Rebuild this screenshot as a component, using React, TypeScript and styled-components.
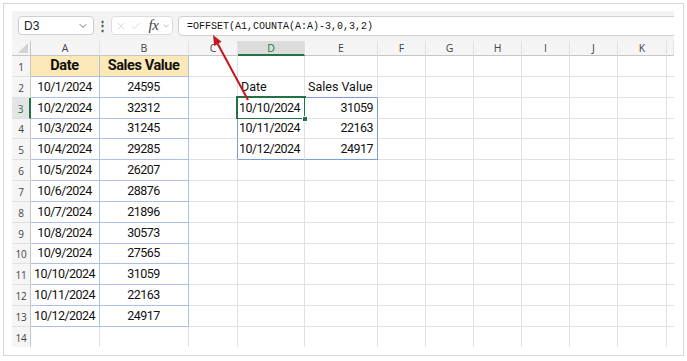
import React from "react";
import styled, { createGlobalStyle, css } from "styled-components";
import { ChevronDown, X, Check } from "lucide-react";

const GlobalStyle = createGlobalStyle`
  html, body {
    margin: 0;
    padding: 0;
    background: #ffffff;
  }
  body {
    font-family: "Liberation Sans", Arial, sans-serif;
  }
`;

const GREEN = "#217346";
const GRID = "#e1e1e1";
const HEAD_LINE = "#c6c6c6";
const TABLE_BLUE = "#abc0e6";
const RANGE_BLUE = "#7c9dd8";

const Frame = styled.div`
  margin: 3px 0 0 3px;
  width: 681px;
  height: 353px;
  box-sizing: border-box;
  border: 1px solid #d6d6d6;
  padding: 7px 8px 0 8px;
  background: #ffffff;
`;

const Sheet = styled.div`
  position: relative;
  width: 662px;
  height: 336px;
  overflow: hidden;
  background: #f3f3f3;
`;

const FormulaBar = styled.div`
  display: flex;
  align-items: flex-start;
  height: 30px;
  padding: 5px 0 0 6px;
  box-sizing: border-box;
`;

const NameBox = styled.div`
  width: 76px;
  height: 19px;
  box-sizing: border-box;
  border: 1px solid #cfcfcf;
  border-radius: 4px;
  background: #fff;
  display: flex;
  align-items: center;
  justify-content: space-between;
  padding: 0 4px 0 5px;
  font-size: 12px;
  color: #222;
`;

const Dots = styled.div`
  width: 17px;
  height: 19px;
  display: flex;
  align-items: center;
  justify-content: center;
  font-size: 13px;
  font-weight: bold;
  color: #555;
`;

const FuncBox = styled.div`
  width: 62px;
  height: 19px;
  box-sizing: border-box;
  border: 1px solid #dcdcdc;
  border-radius: 4px;
  background: #fff;
  display: flex;
  align-items: center;
  gap: 3px;
  padding: 0 2px 0 3px;
  color: #b8b8b8;
`;

const Fx = styled.span`
  font-family: "Liberation Serif", "Times New Roman", serif;
  font-style: italic;
  font-size: 15px;
  line-height: 15px;
  color: #444;
  margin-left: 4px;
  letter-spacing: -0.3px;
`;

const FormulaInput = styled.div`
  flex: 1;
  height: 20px;
  margin: 0 -6px 0 5px;
  box-sizing: border-box;
  border: 1px solid #d0d0d0;
  border-radius: 4px;
  background: #fff;
  display: flex;
  align-items: center;
  padding-left: 8px;
  font-family: "Liberation Mono", "Courier New", monospace;
  font-size: 10px;
  color: #111;
`;

const Grid = styled.div`
  display: grid;
  grid-template-columns: 19px 69px 89px 49px 67px 73px 48px 48px 48px 48px 48px 49px 7px;
  grid-template-rows: 15px repeat(14, 20.85px);
  background: #ffffff;
`;

const Corner = styled.div`
  background: #f5f5f5;
  border-right: 1px solid ${HEAD_LINE};
  border-bottom: 1px solid ${HEAD_LINE};
  box-sizing: border-box;
  display: flex;
  align-items: flex-end;
  justify-content: flex-end;
  padding: 0 2px 2px 0;
`;

const ColHead = styled.div<{ $active?: boolean }>`
  box-sizing: border-box;
  background: ${p => (p.$active ? "#dcdcdc" : "#f5f5f5")};
  border-right: 1px solid ${GRID};
  border-bottom: ${p => (p.$active ? `2px solid ${GREEN}` : `1px solid ${HEAD_LINE}`)};
  display: flex;
  align-items: center;
  justify-content: center;
  font-size: 10.5px;
  color: ${p => (p.$active ? GREEN : "#444")};
  font-family: "Open Sans", "Liberation Sans", sans-serif;
`;

const RowHead = styled.div<{ $active?: boolean }>`
  box-sizing: border-box;
  background: ${p => (p.$active ? "#e4e4e4" : "#f5f5f5")};
  border-right: ${p => (p.$active ? `2px solid ${GREEN}` : `1px solid ${HEAD_LINE}`)};
  border-bottom: 1px solid ${GRID};
  display: flex;
  align-items: flex-end;
  justify-content: center;
  padding-bottom: 2px;
  font-size: 10px;
  letter-spacing: -0.2px;
  color: ${p => (p.$active ? GREEN : "#444")};
  font-family: "Open Sans", "Liberation Sans", sans-serif;
`;

type Align = "left" | "center" | "right";

const Cell = styled.div<{
  $align: Align;
  $bold?: boolean;
  $bg?: string;
  $right: string;
  $bottom: string;
  $numeric?: boolean;
  $selected?: boolean;
}>`
  position: relative;
  box-sizing: border-box;
  background: ${p => p.$bg || "#ffffff"};
  border-right: 1px solid ${p => p.$right};
  border-bottom: 1px solid ${p => p.$bottom};
  display: flex;
  align-items: flex-end;
  justify-content: ${p =>
    p.$align === "left" ? "flex-start" : p.$align === "right" ? "flex-end" : "center"};
  padding: 0 4px 2px 3px;
  font-family: Roboto, "Liberation Sans", sans-serif;
  font-size: ${p => (p.$bold ? "14.5px" : "12.5px")};
  font-weight: ${p => (p.$bold ? 700 : 400)};
  letter-spacing: ${p => (p.$bold ? "-0.4px" : p.$numeric ? "-0.55px" : "0")};
  line-height: 16px;
  color: #111;
  white-space: nowrap;
  ${p =>
    p.$selected &&
    css`
      &::after {
        content: "";
        position: absolute;
        left: -2px;
        top: -2px;
        right: -2px;
        bottom: -2px;
        border: 2px solid ${GREEN};
        pointer-events: none;
      }
      &::before {
        content: "";
        position: absolute;
        right: -4px;
        bottom: -4px;
        width: 4px;
        height: 4px;
        background: ${GREEN};
        border: 1px solid #fff;
        z-index: 2;
      }
    `}
`;

const Overlay = styled.svg`
  position: absolute;
  left: 0;
  top: 0;
  pointer-events: none;
`;

const COLS = ["A", "B", "C", "D", "E", "F", "G", "H", "I", "J", "K"];

const sales = [24595, 32312, 31245, 29285, 26207, 28876, 21896, 30573, 27565, 31059, 22163, 24917];

const cells: Record<string, string> = {
  A1: "Date",
  B1: "Sales Value",
  D2: "Date",
  E2: "Sales Value",
  D3: "10/10/2024",
  E3: "31059",
  D4: "10/11/2024",
  E4: "22163",
  D5: "10/12/2024",
  E5: "24917",
};
sales.forEach((v, i) => {
  cells[`A${i + 2}`] = `10/${i + 1}/2024`;
  cells[`B${i + 2}`] = String(v);
});

function cellStyle(col: string, row: number) {
  const inTable = (col === "A" || col === "B") && row <= 13;
  const inRange = (col === "D" || col === "E") && row >= 3 && row <= 5;
  let right = GRID;
  let bottom = GRID;
  if (inTable) {
    right = TABLE_BLUE;
    bottom = TABLE_BLUE;
  }
  if ((col === "C" || col === "E") && row >= 3 && row <= 5) right = RANGE_BLUE;
  if ((col === "D" || col === "E") && (row === 2 || row === 5)) bottom = RANGE_BLUE;
  let align: Align = "left";
  if (inTable) align = "center";
  else if (inRange) align = "right";
  return {
    right,
    bottom,
    align,
    bold: row === 1 && inTable,
    bg: row === 1 && inTable ? "#fde9b8" : undefined,
  };
}

function CornerMark() {
  return (
    <svg width="10" height="10" viewBox="0 0 10 10">
      <polygon points="10,0 10,10 0,10" fill="#d2d2d2" />
    </svg>
  );
}

function Arrow() {
  return (
    <Overlay width="662" height="336" viewBox="0 0 662 336">
      <line x1="236" y1="89" x2="205.5" y2="32.5" stroke="#c8141c" strokeWidth="2" />
      <polygon points="201,24 209.5,30.8 202.2,35" fill="#c8141c" />
    </Overlay>
  );
}

export default function App() {
  const rows = Array.from({ length: 14 }, (_, i) => i + 1);
  return (
    <>
      <GlobalStyle />
      <Frame>
        <Sheet>
          <FormulaBar>
            <NameBox>
              <span>D3</span>
              <ChevronDown size={12} color="#555" strokeWidth={1.6} />
            </NameBox>
            <Dots>⋮</Dots>
            <FuncBox>
              <X size={14} strokeWidth={1.1} />
              <Check size={14} strokeWidth={1.1} />
              <Fx>fx</Fx>
              <ChevronDown size={10} color="#777" strokeWidth={1.4} />
            </FuncBox>
            <FormulaInput>=OFFSET(A1,COUNTA(A:A)-3,0,3,2)</FormulaInput>
          </FormulaBar>
          <Grid>
            <Corner>
              <CornerMark />
            </Corner>
            {COLS.map(c => (
              <ColHead key={c} $active={c === "D"}>
                {c}
              </ColHead>
            ))}
            <ColHead />
            {rows.map(r => (
              <React.Fragment key={r}>
                <RowHead $active={r === 3}>{r}</RowHead>
                {COLS.map(c => {
                  const s = cellStyle(c, r);
                  const text = cells[`${c}${r}`];
                  return (
                    <Cell
                      key={c}
                      $align={s.align}
                      $bold={s.bold}
                      $bg={s.bg}
                      $right={s.right}
                      $bottom={s.bottom}
                      $numeric={!!text && /^[\d/]+$/.test(text)}
                      $selected={c === "D" && r === 3}
                    >
                      {text}
                    </Cell>
                  );
                })}
                <Cell $align="left" $right="transparent" $bottom={GRID} />
              </React.Fragment>
            ))}
          </Grid>
          <Arrow />
        </Sheet>
      </Frame>
    </>
  );
}
